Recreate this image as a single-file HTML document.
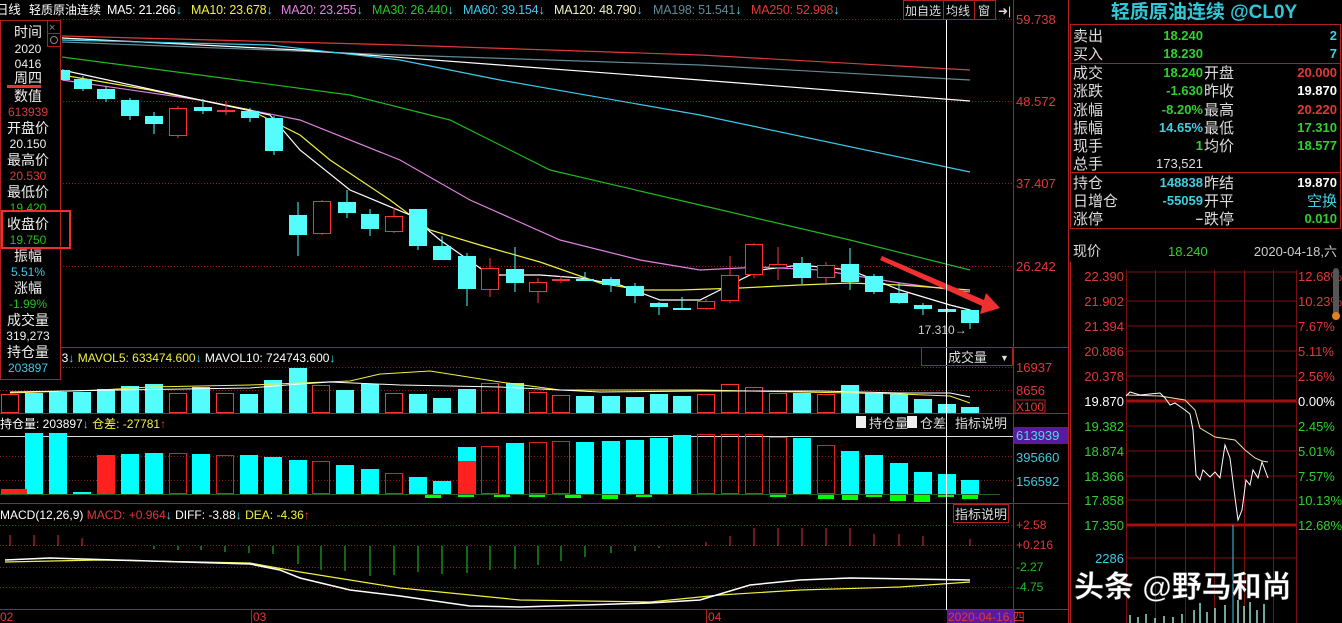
<!DOCTYPE html>
<html><head><meta charset="utf-8"><style>
html,body{margin:0;padding:0;background:#000;width:1342px;height:623px;overflow:hidden}
svg{display:block}
text{font-family:"Liberation Sans","Noto Sans CJK SC",sans-serif}
</style></head><body>
<svg width="1342" height="623" viewBox="0 0 1342 623" xmlns="http://www.w3.org/2000/svg">
<rect width="1342" height="623" fill="#000"/>
<g stroke="#8a1c1c" stroke-dasharray="1,2" stroke-width="1">
<line x1="60" y1="19.5" x2="1013" y2="19.5"/><line x1="60" y1="101.5" x2="1013" y2="101.5"/>
<line x1="60" y1="183.5" x2="1013" y2="183.5"/><line x1="60" y1="266.5" x2="1013" y2="266.5"/>
<line x1="0" y1="367.5" x2="1013" y2="367.5"/><line x1="0" y1="390.5" x2="1013" y2="390.5"/>
<line x1="0" y1="456.5" x2="1013" y2="456.5"/><line x1="0" y1="480.5" x2="1013" y2="480.5"/>
<line x1="0" y1="525.5" x2="1013" y2="525.5"/><line x1="0" y1="545.5" x2="1013" y2="545.5"/>
<line x1="0" y1="567.5" x2="1013" y2="567.5"/><line x1="0" y1="587.5" x2="1013" y2="587.5"/>
</g>
<g stroke="#b02020" stroke-width="1">
<line x1="0" y1="347.5" x2="1068" y2="347.5"/>
<line x1="0" y1="413.5" x2="1068" y2="413.5"/>
<line x1="0" y1="503.5" x2="1068" y2="503.5"/>
<line x1="0" y1="609.5" x2="1068" y2="609.5"/>
<line x1="1013.5" y1="0" x2="1013.5" y2="623"/>
<line x1="1068.5" y1="0" x2="1068.5" y2="623"/>
</g>
<line x1="0" y1="436.5" x2="1013" y2="436.5" stroke="#ddd"/>

<g fill="none" stroke-width="1.2">
<polyline stroke="#e03838" points="62,36 400,45 700,55 970,70"/>
<polyline stroke="#5f8a96" points="62,42 400,55 700,65 970,80"/>
<polyline stroke="#fff" points="62,38 300,50 500,65 700,80 970,101"/>
<polyline stroke="#3cc8e8" points="62,40 270,45 400,60 500,80 700,115 970,172"/>
<polyline stroke="#22b822" points="62,57 200,75 350,95 450,120 550,170 700,205 850,240 970,270"/>
<polyline stroke="#e080e0" points="62,80 200,100 300,120 400,160 470,200 560,240 640,260 700,270 760,267 820,270 900,283 970,292"/>
<polyline stroke="#f0f040" points="62,75 150,90 250,110 300,135 330,160 390,200 430,230 480,245 540,262 600,283 640,290 680,290 740,288 800,285 850,283 900,285 970,290"/>
<polyline stroke="#fff" points="62,70 200,100 270,115 300,150 350,190 410,215 440,240 490,275 540,275 580,278 620,285 660,300 700,300 730,285 760,270 800,265 850,270 900,290 950,305 970,310"/>
</g>

<g>
<g stroke="#54fcfc" stroke-width="1">
<line x1="83" y1="76" x2="83" y2="91"/><line x1="106" y1="86" x2="106" y2="102"/><line x1="130" y1="98" x2="130" y2="120"/><line x1="154" y1="112" x2="154" y2="134"/><line x1="203" y1="99" x2="203" y2="114"/><line x1="250" y1="108" x2="250" y2="122"/><line x1="274" y1="116" x2="274" y2="155"/><line x1="298" y1="202" x2="298" y2="256"/><line x1="347" y1="190" x2="347" y2="218"/><line x1="370" y1="209" x2="370" y2="236"/><line x1="418" y1="209" x2="418" y2="250"/><line x1="442" y1="236" x2="442" y2="260"/><line x1="467" y1="253" x2="467" y2="306"/><line x1="515" y1="247" x2="515" y2="292"/><line x1="585" y1="272" x2="585" y2="281"/><line x1="611" y1="277" x2="611" y2="292"/><line x1="635" y1="283" x2="635" y2="303"/><line x1="659" y1="302" x2="659" y2="315"/><line x1="682" y1="297" x2="682" y2="310"/><line x1="802" y1="257" x2="802" y2="284"/><line x1="850" y1="248" x2="850" y2="290"/><line x1="874" y1="274" x2="874" y2="294"/><line x1="899" y1="283" x2="899" y2="304"/><line x1="923" y1="303" x2="923" y2="315"/><line x1="947" y1="308" x2="947" y2="313"/><line x1="970" y1="309" x2="970" y2="329"/>
</g>
<g fill="#54fcfc">
<rect x="58" y="70" width="12" height="10"/><rect x="74" y="79" width="18" height="10"/><rect x="97" y="89" width="18" height="10"/><rect x="121" y="100" width="18" height="16"/><rect x="145" y="116" width="18" height="8"/><rect x="194" y="107" width="18" height="4"/><rect x="241" y="111" width="18" height="7"/><rect x="265" y="118" width="18" height="33"/><rect x="289" y="215" width="18" height="20"/><rect x="338" y="202" width="18" height="11"/><rect x="361" y="214" width="18" height="15"/><rect x="409" y="209" width="18" height="37"/><rect x="433" y="246" width="18" height="14"/><rect x="458" y="256" width="18" height="33"/><rect x="506" y="269" width="18" height="14"/><rect x="576" y="279" width="18" height="2"/><rect x="602" y="279" width="18" height="6"/><rect x="626" y="286" width="18" height="10"/><rect x="650" y="303" width="18" height="4"/><rect x="673" y="308" width="18" height="2"/><rect x="793" y="263" width="18" height="15"/><rect x="841" y="264" width="18" height="18"/><rect x="865" y="276" width="18" height="16"/><rect x="890" y="293" width="18" height="10"/><rect x="914" y="305" width="18" height="4"/><rect x="938" y="309" width="18" height="3"/><rect x="961" y="310" width="18" height="13"/>
</g>
<g stroke="#ff3232" stroke-width="1" fill="#000">
<line x1="178" y1="106" x2="178" y2="138"/><line x1="226" y1="101" x2="226" y2="115"/><line x1="322" y1="200" x2="322" y2="235"/><line x1="394" y1="208" x2="394" y2="233"/><line x1="490" y1="258" x2="490" y2="297"/><line x1="538" y1="278" x2="538" y2="303"/><line x1="561" y1="276" x2="561" y2="283"/><line x1="706" y1="299" x2="706" y2="310"/><line x1="730" y1="256" x2="730" y2="303"/><line x1="754" y1="243" x2="754" y2="278"/><line x1="778" y1="247" x2="778" y2="280"/><line x1="826" y1="262" x2="826" y2="283"/>
<rect x="169.5" y="108.5" width="17" height="27"/><rect x="217.5" y="110.5" width="17" height="1"/><rect x="313.5" y="201.5" width="17" height="32"/><rect x="385.5" y="216.5" width="17" height="15"/><rect x="481.5" y="268.5" width="17" height="21"/><rect x="529.5" y="282.5" width="17" height="9"/><rect x="552.5" y="279.5" width="17" height="1"/><rect x="697.5" y="301.5" width="17" height="7"/><rect x="721.5" y="275.5" width="17" height="25"/><rect x="745.5" y="244.5" width="17" height="30"/><rect x="769.5" y="264.5" width="17" height="3"/><rect x="817.5" y="265.5" width="17" height="12"/>
</g>
</g>
<polygon points="882,256 984,300 986,293 1000,308 980,314 982,306 880,260" fill="#f03030"/>
<text x="918" y="334" font-size="12" fill="#ccc">17.310→</text>

<g fill="#54fcfc">
<rect x="25" y="393" width="18" height="20"/><rect x="49" y="392" width="18" height="21"/><rect x="73" y="392" width="18" height="21"/><rect x="97" y="389" width="18" height="24"/><rect x="121" y="386" width="18" height="27"/><rect x="145" y="384" width="18" height="29"/><rect x="192" y="387" width="18" height="26"/><rect x="240" y="394" width="18" height="19"/><rect x="264" y="380" width="18" height="33"/><rect x="289" y="368" width="18" height="45"/><rect x="336" y="390" width="18" height="23"/><rect x="361" y="384" width="18" height="29"/><rect x="409" y="394" width="18" height="19"/><rect x="433" y="398" width="18" height="15"/><rect x="458" y="389" width="18" height="24"/><rect x="506" y="383" width="18" height="30"/><rect x="576" y="396" width="18" height="17"/><rect x="602" y="396" width="18" height="17"/><rect x="626" y="397" width="18" height="16"/><rect x="650" y="394" width="18" height="19"/><rect x="673" y="396" width="18" height="17"/><rect x="793" y="393" width="18" height="20"/><rect x="841" y="385" width="18" height="28"/><rect x="865" y="393" width="18" height="20"/><rect x="890" y="394" width="18" height="19"/><rect x="914" y="399" width="18" height="14"/><rect x="938" y="404" width="18" height="9"/><rect x="961" y="407" width="18" height="6"/>
</g>
<g fill="none" stroke="#ff3232">
<rect x="1.5" y="394.5" width="17" height="18"/><rect x="169.5" y="393.5" width="17" height="19"/><rect x="216.5" y="393.5" width="17" height="19"/><rect x="312.5" y="385.5" width="17" height="27"/><rect x="385.5" y="393.5" width="17" height="19"/><rect x="481.5" y="383.5" width="17" height="29"/><rect x="529.5" y="392.5" width="17" height="20"/><rect x="552.5" y="395.5" width="17" height="17"/><rect x="697.5" y="394.5" width="17" height="18"/><rect x="721.5" y="384.5" width="17" height="28"/><rect x="745.5" y="387.5" width="17" height="25"/><rect x="769.5" y="393.5" width="17" height="19"/><rect x="817.5" y="394.5" width="17" height="18"/>
</g>
<polyline fill="none" stroke="#f0f040" points="10,393 100,390 150,387 250,385 350,381 380,374 430,371 500,382 560,390 700,390 800,392 900,394 950,396 970,403"/>
<polyline fill="none" stroke="#fff" points="10,392 120,390 250,388 300,384 330,382 400,385 500,387 600,392 700,391 820,391 900,393 950,393 970,397"/>

<g fill="#00ff00">
<rect x="425" y="494" width="16" height="4"/><rect x="458" y="494" width="16" height="3"/><rect x="494" y="494" width="16" height="3"/><rect x="529" y="494" width="16" height="3"/><rect x="565" y="494" width="16" height="4"/><rect x="602" y="494" width="16" height="5"/><rect x="636" y="494" width="16" height="3"/><rect x="770" y="494" width="16" height="3"/><rect x="818" y="494" width="16" height="5"/><rect x="842" y="494" width="16" height="6"/><rect x="866" y="494" width="16" height="3"/><rect x="890" y="494" width="16" height="7"/><rect x="914" y="494" width="16" height="8"/><rect x="938" y="494" width="16" height="3"/><rect x="962" y="494" width="16" height="5"/>
</g>
<g fill="#00ffff">
<rect x="25" y="433" width="18" height="61"/><rect x="49" y="433" width="18" height="61"/><rect x="73" y="492" width="18" height="2"/><rect x="121" y="454" width="18" height="40"/><rect x="145" y="453" width="18" height="41"/><rect x="192" y="454" width="18" height="40"/><rect x="240" y="455" width="18" height="39"/><rect x="264" y="457" width="18" height="37"/><rect x="289" y="460" width="18" height="34"/><rect x="336" y="465" width="18" height="29"/><rect x="361" y="469" width="18" height="25"/><rect x="409" y="477" width="18" height="17"/><rect x="433" y="481" width="18" height="13"/><rect x="458" y="447" width="18" height="47"/><rect x="506" y="443" width="18" height="51"/><rect x="576" y="442" width="18" height="52"/><rect x="602" y="441" width="18" height="53"/><rect x="626" y="440" width="18" height="54"/><rect x="650" y="438" width="18" height="56"/><rect x="673" y="435" width="18" height="59"/><rect x="793" y="438" width="18" height="56"/><rect x="841" y="451" width="18" height="43"/><rect x="865" y="455" width="18" height="39"/><rect x="890" y="463" width="18" height="31"/><rect x="914" y="472" width="18" height="22"/><rect x="938" y="474" width="18" height="20"/><rect x="961" y="480" width="18" height="14"/>
</g>
<g fill="#ff2020"><rect x="97" y="455" width="18" height="39"/><rect x="458" y="461" width="18" height="33"/><rect x="1" y="489" width="26" height="5"/></g>
<g fill="none" stroke="#e02020">
<rect x="169.5" y="453.5" width="17" height="40"/><rect x="216.5" y="455.5" width="17" height="38"/><rect x="312.5" y="461.5" width="17" height="32"/><rect x="385.5" y="473.5" width="17" height="20"/><rect x="481.5" y="446.5" width="17" height="47"/><rect x="529.5" y="442.5" width="17" height="51"/><rect x="552.5" y="441.5" width="17" height="52"/><rect x="697.5" y="434.5" width="17" height="59"/><rect x="721.5" y="434.5" width="17" height="59"/><rect x="745.5" y="434.5" width="17" height="59"/><rect x="769.5" y="437.5" width="17" height="56"/><rect x="817.5" y="445.5" width="17" height="48"/>
</g>
<line x1="0" y1="494.5" x2="1000" y2="494.5" stroke="#206020"/>

<g stroke="#e03030"><line x1="10" y1="546" x2="10" y2="535"/><line x1="34" y1="546" x2="34" y2="535"/><line x1="58" y1="546" x2="58" y2="535"/><line x1="82" y1="546" x2="82" y2="538"/>
<line x1="706" y1="546" x2="706" y2="542"/><line x1="730" y1="546" x2="730" y2="536"/><line x1="754" y1="546" x2="754" y2="528"/><line x1="778" y1="546" x2="778" y2="528"/><line x1="802" y1="546" x2="802" y2="528"/><line x1="826" y1="546" x2="826" y2="528"/><line x1="850" y1="546" x2="850" y2="528"/><line x1="874" y1="546" x2="874" y2="534"/><line x1="899" y1="546" x2="899" y2="534"/><line x1="923" y1="546" x2="923" y2="536"/><line x1="970" y1="546" x2="970" y2="539"/></g>
<g stroke="#20d020"><line x1="154" y1="546" x2="154" y2="549"/><line x1="178" y1="546" x2="178" y2="550"/><line x1="201" y1="546" x2="201" y2="550"/><line x1="225" y1="546" x2="225" y2="552"/><line x1="249" y1="546" x2="249" y2="553"/><line x1="273" y1="546" x2="273" y2="554"/><line x1="298" y1="546" x2="298" y2="564"/><line x1="321" y1="546" x2="321" y2="570"/><line x1="345" y1="546" x2="345" y2="571"/><line x1="370" y1="546" x2="370" y2="576"/><line x1="394" y1="546" x2="394" y2="575"/><line x1="418" y1="546" x2="418" y2="572"/><line x1="442" y1="546" x2="442" y2="574"/><line x1="467" y1="546" x2="467" y2="573"/><line x1="490" y1="546" x2="490" y2="570"/><line x1="515" y1="546" x2="515" y2="569"/><line x1="538" y1="546" x2="538" y2="565"/><line x1="561" y1="546" x2="561" y2="561"/><line x1="585" y1="546" x2="585" y2="557"/><line x1="611" y1="546" x2="611" y2="553"/><line x1="635" y1="546" x2="635" y2="551"/><line x1="659" y1="546" x2="659" y2="548"/></g>
<polyline fill="none" stroke="#f0f040" stroke-width="1.2" points="5,562 100,560 250,563 300,572 400,588 520,600 650,602 720,595 800,590 900,587 970,582"/>
<polyline fill="none" stroke="#fff" stroke-width="1.5" points="5,560 50,558 150,561 250,564 280,570 300,578 350,590 400,596 470,606 520,607 650,603 700,600 750,585 800,580 850,578 970,580"/>

<line x1="946.5" y1="20" x2="946.5" y2="610" stroke="#fff"/>

<g font-size="13" fill="#e03838">
<text x="1016" y="24">59.738</text><text x="1016" y="106">48.572</text><text x="1016" y="188">37.407</text><text x="1016" y="271">26.242</text>
<text x="1016" y="372">16937</text><text x="1016" y="395">8656</text>
</g>
<rect x="1015" y="400" width="30" height="13" fill="none" stroke="#b02020"/>
<text x="1016" y="411" font-size="12" fill="#e03838">X100</text>
<rect x="1014" y="427" width="54" height="17" fill="#5a1aa0"/>
<text x="1016" y="440" font-size="13" fill="#40e0e0">613939</text>
<text x="1016" y="462" font-size="13" fill="#40c8d8">395660</text>
<text x="1016" y="486" font-size="13" fill="#40c8d8">156592</text>
<g font-size="12" fill="#e03838"><text x="1016" y="529">+2.58</text><text x="1016" y="549">+0.216</text></g>
<g font-size="12" fill="#20c020"><text x="1016" y="571">-2.27</text><text x="1016" y="591">-4.75</text></g>
<rect x="947" y="610" width="68" height="13" fill="#5a1aa0"/>
<text x="948" y="621" font-size="12" fill="#e03838">2020-04-16,四</text>
<g font-size="12" fill="#e03838"><text x="0" y="621">02</text><text x="253" y="621">03</text><text x="708" y="621">04</text></g>
<g stroke="#b02020"><line x1="251.5" y1="610" x2="251.5" y2="623"/><line x1="706.5" y1="610" x2="706.5" y2="623"/></g>

<g font-size="12.5" letter-spacing="-0.2">
<text x="-4" y="14" fill="#fff">日线</text><text x="29" y="14" fill="#fff" font-size="12" letter-spacing="0">轻质原油连续</text>
<text x="107" y="14" fill="#fff">MA5: 21.266<tspan fill="#40e0f0">↓</tspan></text>
<text x="191" y="14" fill="#f0f040">MA10: 23.678<tspan fill="#40e0f0">↓</tspan></text>
<text x="281" y="14" fill="#e080e0">MA20: 23.255<tspan fill="#40e0f0">↓</tspan></text>
<text x="372" y="14" fill="#22c822">MA30: 26.440<tspan fill="#40e0f0">↓</tspan></text>
<text x="463" y="14" fill="#40c8e8">MA60: 39.154<tspan fill="#40e0f0">↓</tspan></text>
<text x="554" y="14" fill="#f0f0c0">MA120: 48.790<tspan fill="#40e0f0">↓</tspan></text>
<text x="653" y="14" fill="#5f8a96">MA198: 51.541<tspan fill="#40e0f0">↓</tspan></text>
<text x="751" y="14" fill="#e03838">MA250: 52.998<tspan fill="#40e0f0">↓</tspan></text>
</g>
<g fill="none" stroke="#b02020"><rect x="903.5" y="0.5" width="40" height="19"/><rect x="943.5" y="0.5" width="31" height="19"/><rect x="974.5" y="0.5" width="21" height="19"/></g>
<g font-size="12" fill="#ddd"><text x="905" y="15">加自选</text><text x="946" y="15">均线</text><text x="978" y="15">窗</text><text x="998" y="15">➜|</text></g>

<text x="55" y="362" font-size="12" fill="#fff">73<tspan fill="#40e0f0">↓</tspan> <tspan fill="#f0f040">MAVOL5: 633474.600</tspan><tspan fill="#40e0f0">↓</tspan> MAVOL10: 724743.600<tspan fill="#40e0f0">↓</tspan></text>
<rect x="921.5" y="347.5" width="91" height="18" fill="none" stroke="#b02020"/>
<text x="948" y="362" font-size="13" fill="#ddd">成交量</text><text x="1000" y="361" font-size="9" fill="#ddd">▼</text>
<text x="0" y="428" font-size="12" fill="#fff">持仓量: 203897<tspan fill="#40e0f0">↓</tspan> <tspan fill="#f0f040">仓差: -27781</tspan><tspan fill="#ff3030">↑</tspan></text>
<rect x="856" y="416" width="10" height="12" fill="#eee"/><rect x="907" y="416" width="10" height="12" fill="#eee"/>
<g font-size="13" fill="#ddd"><text x="869" y="428">持仓量</text><text x="920" y="428">仓差</text><text x="955" y="428">指标说明</text></g>
<rect x="953.5" y="504.5" width="55" height="18" fill="none" stroke="#b02020"/>
<text x="955" y="519" font-size="13" fill="#ddd">指标说明</text>
<text x="0" y="519" font-size="12" fill="#fff">MACD(12,26,9) <tspan fill="#e03838">MACD: +0.964</tspan><tspan fill="#40e0f0">↓</tspan> DIFF: -3.88<tspan fill="#40e0f0">↓</tspan> <tspan fill="#f0f040">DEA: -4.36</tspan><tspan fill="#ff3030">↑</tspan></text>

<rect x="0" y="20" width="60" height="360" fill="#000"/>
<rect x="0.5" y="20.5" width="60" height="359" fill="none" stroke="#b02020"/>
<rect x="47.5" y="20.5" width="13" height="13" fill="none" stroke="#b02020"/><text x="49" y="31" font-size="11" fill="#888">×</text>
<rect x="47.5" y="33.5" width="13" height="13" fill="none" stroke="#b02020"/><circle cx="54" cy="40" r="3.5" fill="none" stroke="#888"/>
<g font-size="14" fill="#eee" text-anchor="middle">
<text x="28" y="37">时间</text><text x="28" y="53" font-size="12">2020</text><text x="28" y="68" font-size="12">0416</text><text x="28" y="83">周四</text>
<text x="28" y="101">数值</text><text x="28" y="133">开盘价</text><text x="28" y="165">最高价</text><text x="28" y="197">最低价</text>
<text x="28" y="229">收盘价</text><text x="28" y="261">振幅</text><text x="28" y="293">涨幅</text><text x="28" y="325">成交量</text><text x="28" y="357">持仓量</text>
</g>
<g font-size="12" text-anchor="middle">
<text x="28" y="116" fill="#e03838">613939</text><text x="28" y="148" fill="#eee">20.150</text><text x="28" y="180" fill="#e03838">20.530</text>
<text x="28" y="212" fill="#20c020">19.420</text><text x="28" y="244" fill="#20c020">19.750</text><text x="28" y="276" fill="#40c8e8">5.51%</text>
<text x="28" y="308" fill="#20c020">-1.99%</text><text x="28" y="340" fill="#eee">319,273</text><text x="28" y="372" fill="#40c8e8">203897</text>
</g>
<rect x="7" y="85" width="34" height="3" fill="#f03030"/>
<rect x="2" y="211" width="68" height="37" fill="none" stroke="#f03030" stroke-width="2"/>

<text x="1204" y="18" font-size="19" font-weight="bold" fill="#30c8d8" text-anchor="middle" font-family="Liberation Serif,Noto Serif CJK SC,serif">轻质原油连续 @CL0Y</text>
<rect x="1070.5" y="24.5" width="270" height="204" fill="none" stroke="#b02020"/>
<g stroke="#b02020"><line x1="1070" y1="63.5" x2="1340" y2="63.5"/><line x1="1070" y1="172.5" x2="1340" y2="172.5"/></g>
<g font-size="15" fill="#ddd">
<text x="1073" y="41">卖出</text><text x="1073" y="59">买入</text><text x="1073" y="78">成交</text><text x="1073" y="96">涨跌</text><text x="1073" y="115">涨幅</text><text x="1073" y="133">振幅</text><text x="1073" y="151">现手</text><text x="1073" y="169">总手</text><text x="1073" y="188">持仓</text><text x="1073" y="206">日增仓</text><text x="1073" y="224">涨停</text>
<text x="1204" y="78">开盘</text><text x="1204" y="96">昨收</text><text x="1204" y="115">最高</text><text x="1204" y="133">最低</text><text x="1204" y="151">均价</text><text x="1204" y="188">昨结</text><text x="1204" y="206">开平</text><text x="1204" y="224">跌停</text>
</g>
<g font-size="13" font-weight="bold" text-anchor="end">
<text x="1203" y="40" fill="#30d030">18.240</text><text x="1203" y="58" fill="#30d030">18.230</text>
<text x="1337" y="40" fill="#40d0e0">2</text><text x="1337" y="58" fill="#40d0e0">7</text>
<text x="1203" y="77" fill="#30d030">18.240</text><text x="1203" y="95" fill="#30d030">-1.630</text><text x="1203" y="114" fill="#30d030">-8.20%</text><text x="1203" y="132" fill="#40d0e0">14.65%</text><text x="1203" y="150" fill="#30d030">1</text><text x="1203" y="168" fill="#ddd" font-weight="normal">173,521</text>
<text x="1337" y="77" fill="#e03838">20.000</text><text x="1337" y="95" fill="#fff">19.870</text><text x="1337" y="114" fill="#e03838">20.220</text><text x="1337" y="132" fill="#30d030">17.310</text><text x="1337" y="150" fill="#30d030">18.577</text>
<text x="1203" y="187" fill="#40d0e0">148838</text><text x="1203" y="205" fill="#40d0e0">-55059</text><text x="1203" y="223" fill="#ddd">–</text>
<text x="1337" y="187" fill="#fff">19.870</text><text x="1337" y="223" fill="#30d030">0.010</text>
</g>
<text x="1337" y="206" font-size="15" fill="#40d0e0" text-anchor="end">空换</text>
<text x="1073" y="256" font-size="14" fill="#ddd">现价</text>
<text x="1168" y="256" font-size="13" fill="#30d030">18.240</text>
<text x="1337" y="256" font-size="13" fill="#ccc" text-anchor="end">2020-04-18,六</text>
<line x1="1070.5" y1="262" x2="1070.5" y2="623" stroke="#b02020"/>

<g stroke="#7a1010">
<line x1="1126" y1="272" x2="1296" y2="272"/><line x1="1126" y1="301" x2="1296" y2="301"/><line x1="1126" y1="326" x2="1296" y2="326"/><line x1="1126" y1="351" x2="1296" y2="351"/><line x1="1126" y1="376" x2="1296" y2="376"/><line x1="1126" y1="426" x2="1296" y2="426"/><line x1="1126" y1="451" x2="1296" y2="451"/><line x1="1126" y1="476" x2="1296" y2="476"/><line x1="1126" y1="500" x2="1296" y2="500"/>
<line x1="1126" y1="558" x2="1296" y2="558"/>
<line x1="1126.5" y1="270" x2="1126.5" y2="623"/><line x1="1155.5" y1="270" x2="1155.5" y2="623"/><line x1="1185.5" y1="270" x2="1185.5" y2="623"/><line x1="1214.5" y1="270" x2="1214.5" y2="623"/><line x1="1244.5" y1="270" x2="1244.5" y2="623"/><line x1="1273.5" y1="270" x2="1273.5" y2="623"/><line x1="1296.5" y1="270" x2="1296.5" y2="623"/>
</g>
<g stroke="#a01010" stroke-width="3"><line x1="1126" y1="401" x2="1296" y2="401"/><line x1="1126" y1="525" x2="1296" y2="525"/></g>
<g font-size="13" text-anchor="end">
<text x="1124" y="281" fill="#e03838">22.390</text><text x="1124" y="306" fill="#e03838">21.902</text><text x="1124" y="331" fill="#e03838">21.394</text><text x="1124" y="356" fill="#e03838">20.886</text><text x="1124" y="381" fill="#e03838">20.378</text><text x="1124" y="406" fill="#fff">19.870</text><text x="1124" y="431" fill="#30d030">19.382</text><text x="1124" y="456" fill="#30d030">18.874</text><text x="1124" y="481" fill="#30d030">18.366</text><text x="1124" y="505" fill="#30d030">17.858</text><text x="1124" y="530" fill="#30d030">17.350</text><text x="1124" y="563" fill="#40c8e8">2286</text>
</g>
<g font-size="13">
<text x="1298" y="281" fill="#e03838">12.68%</text><text x="1298" y="306" fill="#e03838">10.23%</text><text x="1298" y="331" fill="#e03838">7.67%</text><text x="1298" y="356" fill="#e03838">5.11%</text><text x="1298" y="381" fill="#e03838">2.56%</text><text x="1298" y="406" fill="#fff">0.00%</text><text x="1298" y="431" fill="#30d030">2.45%</text><text x="1298" y="456" fill="#30d030">5.01%</text><text x="1298" y="481" fill="#30d030">7.57%</text><text x="1298" y="505" fill="#30d030">10.13%</text><text x="1298" y="530" fill="#30d030">12.68%</text>
</g>
<rect x="1333" y="268" width="6" height="50" rx="3" fill="#555"/><circle cx="1336" cy="316" r="4" fill="#e08020"/>
<polyline fill="none" stroke="#f0e0a0" points="1126,395 1160,396 1185,400 1195,410 1200,428 1215,437 1235,440 1240,445 1245,450 1255,458 1262,461 1268,462"/>
<polyline fill="none" stroke="#fff" points="1126,396 1130,392 1140,395 1150,394 1160,393 1165,398 1170,405 1175,403 1185,410 1190,414 1193,430 1196,475 1200,480 1203,470 1210,477 1215,472 1220,478 1225,445 1230,458 1234,490 1238,520 1242,510 1246,480 1250,485 1253,470 1258,478 1262,462 1265,470 1268,478"/>
<line x1="1233" y1="525" x2="1233" y2="623" stroke="#40c8e8"/>
<g stroke="#90e0d0" stroke-width="1.5">
<line x1="1130" y1="623" x2="1130" y2="615"/><line x1="1138" y1="623" x2="1138" y2="617"/><line x1="1146" y1="623" x2="1146" y2="614"/><line x1="1155" y1="623" x2="1155" y2="618"/><line x1="1164" y1="623" x2="1164" y2="616"/><line x1="1173" y1="623" x2="1173" y2="617"/><line x1="1182" y1="623" x2="1182" y2="614"/><line x1="1194" y1="623" x2="1194" y2="610"/><line x1="1200" y1="623" x2="1200" y2="603"/><line x1="1207" y1="623" x2="1207" y2="612"/><line x1="1215" y1="623" x2="1215" y2="608"/><line x1="1225" y1="623" x2="1225" y2="605"/><line x1="1238" y1="623" x2="1238" y2="600"/><line x1="1244" y1="623" x2="1244" y2="606"/><line x1="1250" y1="623" x2="1250" y2="602"/><line x1="1257" y1="623" x2="1257" y2="610"/><line x1="1264" y1="623" x2="1264" y2="604"/>
</g>
<text x="1074" y="597" font-size="30" font-weight="bold" fill="#fff" stroke="#333" stroke-width="0.5">头条 @野马和尚</text>
</svg>
</body></html>
